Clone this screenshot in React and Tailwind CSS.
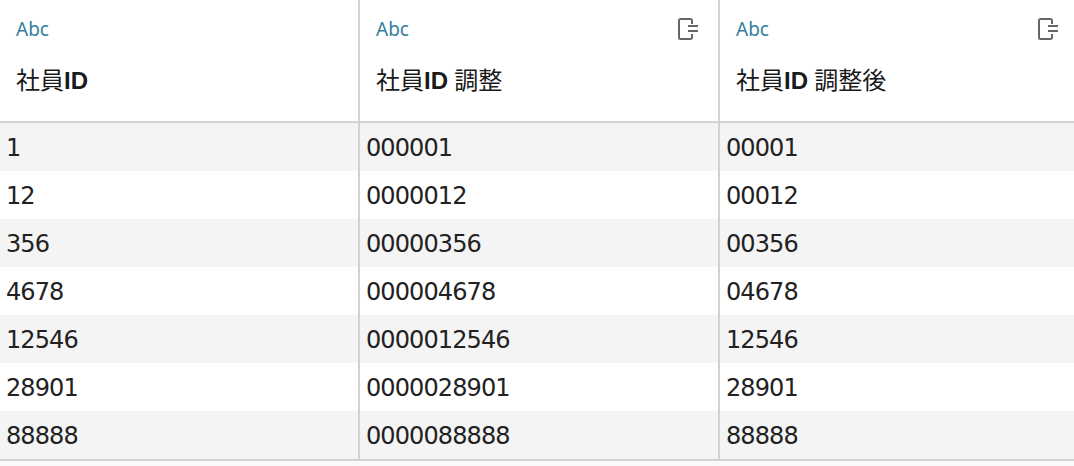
const font = { fontFamily: '"Noto Sans", "Noto Sans CJK JP", sans-serif' }
const cellFont = { fontFamily: '"DejaVu Sans", sans-serif' }
const idFont = { fontFamily: '"Liberation Sans", sans-serif' }

const columns = [
  { name: '社員', bold: 'ID', rest: '', icon: false },
  { name: '社員', bold: 'ID', rest: ' 調整', icon: true },
  { name: '社員', bold: 'ID', rest: ' 調整後', icon: true },
]

const rows = [
  ['1', '000001', '00001'],
  ['12', '0000012', '00012'],
  ['356', '00000356', '00356'],
  ['4678', '000004678', '04678'],
  ['12546', '0000012546', '12546'],
  ['28901', '0000028901', '28901'],
  ['88888', '0000088888', '88888'],
]

function FieldIcon() {
  return (
    <svg width="20" height="22" viewBox="0 0 20 22" fill="none" stroke="#666666" strokeWidth="2">
      <path d="M14 6V2.500A1.500 1.500 0 0 0 12.500 1h-10A1.500 1.500 0 0 0 1 2.500v17A1.500 1.500 0 0 0 2.500 21h10a1.500 1.500 0 0 0 1.500-1.500V16" />
      <path d="M10 8h10M10 13h10" />
    </svg>
  )
}

export default function App() {
  return (
    <div className="w-[1074px] h-[466px] overflow-hidden bg-[#fafafa] text-[#1a1a1a]" style={font}>
      <div className="flex h-[121px] bg-white border-b-2 border-[#d2d2d2] box-content">
        {columns.map((col, i) => (
          <div key={i} className={`relative pl-4 pt-[17px] ${i < 2 ? 'w-[360px] border-r-2 border-[#d2d2d2]' : 'flex-1'}`}>
            <div className="text-[19px] leading-6 text-[#347e9e]">Abc</div>
            <div className="mt-[21px] text-[24px] leading-9 whitespace-pre">
              {col.name}<span className="font-bold" style={idFont}>{col.bold}</span>{col.rest}
            </div>
            {col.icon && (
              <div className="absolute left-[318px] top-[18px]">
                <FieldIcon />
              </div>
            )}
          </div>
        ))}
      </div>
      <div className="border-b-2 border-[#d2d2d2] bg-white">
        {rows.map((row, r) => (
          <div key={r} className={`flex h-12 ${r % 2 === 0 ? 'bg-[#f4f4f4]' : 'bg-white'}`}>
            {row.map((cell, i) => (
              <div key={i} className={`pl-[6px] pt-[2px] text-[24px] leading-[46px] tracking-[-0.9px] text-[#222222] ${i < 2 ? 'w-[360px] border-r-2 border-[#d2d2d2]' : 'flex-1'}`} style={cellFont}>
                {cell}
              </div>
            ))}
          </div>
        ))}
      </div>
    </div>
  )
}
